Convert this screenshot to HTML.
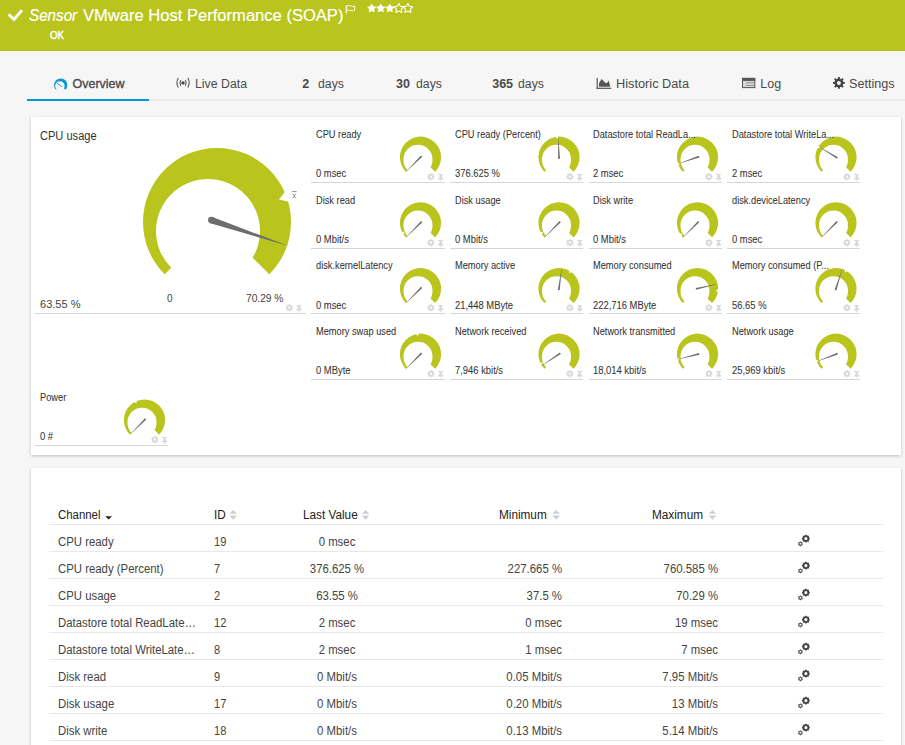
<!DOCTYPE html><html><head><meta charset="utf-8"><style>
*{margin:0;padding:0;box-sizing:border-box}
html,body{width:905px;height:745px;overflow:hidden;background:#f6f6f6;font-family:"Liberation Sans",sans-serif;color:#444}
.a{position:absolute;white-space:nowrap;line-height:1;z-index:2}
.hdr{position:absolute;left:0;top:0;width:905px;height:51px;background:#b9c41c;border-bottom:1px solid #b2bd0c}
.t{color:#fff}
.tab{font-size:12.5px;color:#4a4a4a}
.panel{position:absolute;left:31px;width:870px;background:#fff;box-shadow:0 1px 3px rgba(0,0,0,.22)}
.tt{color:#333;-webkit-text-stroke:0.05px #333}
.ln{position:absolute;height:1px;background:#d6d6d6}
.tb{font-size:12px;color:#444}
.th{font-size:12px;color:#222}
svg{position:absolute;left:0;top:0;overflow:visible;z-index:1}
</style></head><body>
<div class="hdr"></div>
<div class="a t" style="left:29px;top:8px;font-size:16px;transform:scaleX(0.95);transform-origin:0 0;-webkit-text-stroke:0.2px #fff"><i>Sensor</i></div>
<div class="a t" style="left:82.5px;top:8px;font-size:16px;transform:scaleX(1.035);transform-origin:0 0;-webkit-text-stroke:0.2px #fff">VMware Host Performance (SOAP)</div>
<div class="a t" style="left:49.5px;top:30px;font-size:10.5px;transform:scaleX(0.92);transform-origin:0 0;-webkit-text-stroke:0.45px #fff">OK</div>
<div class="a tab" style="left:72.5px;top:78px;font-size:12.5px;transform-origin:0 0;-webkit-text-stroke:0.35px #4a4a4a;">Overview</div>
<div class="a tab" style="left:194.5px;top:78px;font-size:12.5px;transform:scaleX(0.985);transform-origin:0 0;">Live Data</div>
<div class="a tab" style="left:302.3px;top:78px;font-size:12.5px;transform-origin:0 0;font-weight:bold">2</div>
<div class="a tab" style="left:318px;top:78px;font-size:12.5px;transform:scaleX(0.98);transform-origin:0 0;">days</div>
<div class="a tab" style="left:396px;top:78px;font-size:12.5px;transform-origin:0 0;font-weight:bold">30</div>
<div class="a tab" style="left:415.8px;top:78px;font-size:12.5px;transform:scaleX(0.98);transform-origin:0 0;">days</div>
<div class="a tab" style="left:492.2px;top:78px;font-size:12.5px;transform-origin:0 0;font-weight:bold">365</div>
<div class="a tab" style="left:518.2px;top:78px;font-size:12.5px;transform:scaleX(0.98);transform-origin:0 0;">days</div>
<div class="a tab" style="left:616.2px;top:78px;font-size:12.5px;transform:scaleX(1.02);transform-origin:0 0;">Historic Data</div>
<div class="a tab" style="left:760.3px;top:78px;font-size:12.5px;transform-origin:0 0;">Log</div>
<div class="a tab" style="left:849.3px;top:78px;font-size:12.5px;transform:scaleX(1.01);transform-origin:0 0;">Settings</div>
<div class="a" style="left:27px;top:99px;width:878px;height:2px;background:#ebebeb"></div>
<div class="a" style="left:27px;top:99px;width:122px;height:2px;background:#0596d4"></div>
<div class="panel" style="top:117px;height:338px"></div>
<div class="panel" style="top:468px;height:300px"></div>
<div class="a " style="left:39.5px;top:130px;font-size:12.3px;transform:scaleX(0.9);transform-origin:0 0;color:#333">CPU usage</div>
<div class="a " style="left:39.5px;top:299px;font-size:11.5px;transform:scaleX(0.96);transform-origin:0 0;color:#444">63.55 %</div>
<div class="a " style="left:166.5px;top:293px;font-size:10.5px;transform:scaleX(0.95);transform-origin:0 0;color:#444">0</div>
<div class="a " style="left:245.5px;top:293px;font-size:10.5px;transform:scaleX(0.97);transform-origin:0 0;color:#444">70.29 %</div>
<div class="ln" style="left:35px;top:313px;width:271px"></div>
<div class="a tt" style="left:316.0px;top:130px;font-size:10px;transform:scaleX(0.925);transform-origin:0 0;">CPU ready</div>
<div class="a tt" style="left:316.0px;top:169px;font-size:10px;transform:scaleX(0.94);transform-origin:0 0;">0 msec</div>
<div class="ln" style="left:311px;top:182px;width:134px"></div>
<div class="a tt" style="left:454.6px;top:130px;font-size:10px;transform:scaleX(0.925);transform-origin:0 0;">CPU ready (Percent)</div>
<div class="a tt" style="left:454.6px;top:169px;font-size:10px;transform:scaleX(0.94);transform-origin:0 0;">376.625 %</div>
<div class="ln" style="left:450px;top:182px;width:133px"></div>
<div class="a tt" style="left:593.2px;top:130px;font-size:10px;transform:scaleX(0.925);transform-origin:0 0;">Datastore total ReadLa...</div>
<div class="a tt" style="left:593.2px;top:169px;font-size:10px;transform:scaleX(0.94);transform-origin:0 0;">2 msec</div>
<div class="ln" style="left:589px;top:182px;width:133px"></div>
<div class="a tt" style="left:731.8px;top:130px;font-size:10px;transform:scaleX(0.925);transform-origin:0 0;">Datastore total WriteLa...</div>
<div class="a tt" style="left:731.8px;top:169px;font-size:10px;transform:scaleX(0.94);transform-origin:0 0;">2 msec</div>
<div class="ln" style="left:727px;top:182px;width:133px"></div>
<div class="a tt" style="left:316.0px;top:196px;font-size:10px;transform:scaleX(0.925);transform-origin:0 0;">Disk read</div>
<div class="a tt" style="left:316.0px;top:235px;font-size:10px;transform:scaleX(0.94);transform-origin:0 0;">0 Mbit/s</div>
<div class="ln" style="left:311px;top:248px;width:134px"></div>
<div class="a tt" style="left:454.6px;top:196px;font-size:10px;transform:scaleX(0.925);transform-origin:0 0;">Disk usage</div>
<div class="a tt" style="left:454.6px;top:235px;font-size:10px;transform:scaleX(0.94);transform-origin:0 0;">0 Mbit/s</div>
<div class="ln" style="left:450px;top:248px;width:133px"></div>
<div class="a tt" style="left:593.2px;top:196px;font-size:10px;transform:scaleX(0.925);transform-origin:0 0;">Disk write</div>
<div class="a tt" style="left:593.2px;top:235px;font-size:10px;transform:scaleX(0.94);transform-origin:0 0;">0 Mbit/s</div>
<div class="ln" style="left:589px;top:248px;width:133px"></div>
<div class="a tt" style="left:731.8px;top:196px;font-size:10px;transform:scaleX(0.925);transform-origin:0 0;">disk.deviceLatency</div>
<div class="a tt" style="left:731.8px;top:235px;font-size:10px;transform:scaleX(0.94);transform-origin:0 0;">0 msec</div>
<div class="ln" style="left:727px;top:248px;width:133px"></div>
<div class="a tt" style="left:316.0px;top:261px;font-size:10px;transform:scaleX(0.925);transform-origin:0 0;">disk.kernelLatency</div>
<div class="a tt" style="left:316.0px;top:301px;font-size:10px;transform:scaleX(0.94);transform-origin:0 0;">0 msec</div>
<div class="ln" style="left:311px;top:313px;width:134px"></div>
<div class="a tt" style="left:454.6px;top:261px;font-size:10px;transform:scaleX(0.925);transform-origin:0 0;">Memory active</div>
<div class="a tt" style="left:454.6px;top:301px;font-size:10px;transform:scaleX(0.94);transform-origin:0 0;">21,448 MByte</div>
<div class="ln" style="left:450px;top:313px;width:133px"></div>
<div class="a tt" style="left:593.2px;top:261px;font-size:10px;transform:scaleX(0.925);transform-origin:0 0;">Memory consumed</div>
<div class="a tt" style="left:593.2px;top:301px;font-size:10px;transform:scaleX(0.94);transform-origin:0 0;">222,716 MByte</div>
<div class="ln" style="left:589px;top:313px;width:133px"></div>
<div class="a tt" style="left:731.8px;top:261px;font-size:10px;transform:scaleX(0.925);transform-origin:0 0;">Memory consumed (P...</div>
<div class="a tt" style="left:731.8px;top:301px;font-size:10px;transform:scaleX(0.94);transform-origin:0 0;">56.65 %</div>
<div class="ln" style="left:727px;top:313px;width:133px"></div>
<div class="a tt" style="left:316.0px;top:327px;font-size:10px;transform:scaleX(0.925);transform-origin:0 0;">Memory swap used</div>
<div class="a tt" style="left:316.0px;top:366px;font-size:10px;transform:scaleX(0.94);transform-origin:0 0;">0 MByte</div>
<div class="ln" style="left:311px;top:379px;width:134px"></div>
<div class="a tt" style="left:454.6px;top:327px;font-size:10px;transform:scaleX(0.925);transform-origin:0 0;">Network received</div>
<div class="a tt" style="left:454.6px;top:366px;font-size:10px;transform:scaleX(0.94);transform-origin:0 0;">7,946 kbit/s</div>
<div class="ln" style="left:450px;top:379px;width:133px"></div>
<div class="a tt" style="left:593.2px;top:327px;font-size:10px;transform:scaleX(0.925);transform-origin:0 0;">Network transmitted</div>
<div class="a tt" style="left:593.2px;top:366px;font-size:10px;transform:scaleX(0.94);transform-origin:0 0;">18,014 kbit/s</div>
<div class="ln" style="left:589px;top:379px;width:133px"></div>
<div class="a tt" style="left:731.8px;top:327px;font-size:10px;transform:scaleX(0.925);transform-origin:0 0;">Network usage</div>
<div class="a tt" style="left:731.8px;top:366px;font-size:10px;transform:scaleX(0.94);transform-origin:0 0;">25,969 kbit/s</div>
<div class="ln" style="left:727px;top:379px;width:133px"></div>
<div class="a tt" style="left:40px;top:393px;font-size:10px;transform:scaleX(0.925);transform-origin:0 0;">Power</div>
<div class="a tt" style="left:40px;top:432px;font-size:10px;transform:scaleX(0.94);transform-origin:0 0;">0 #</div>
<div class="ln" style="left:35px;top:445px;width:133px"></div>
<div class="a th" style="left:58px;top:509px;font-size:12px;transform:scaleX(0.95);transform-origin:0 0;">Channel</div>
<div class="a th" style="left:214px;top:509px;font-size:12px;transform:scaleX(0.98);transform-origin:0 0;">ID</div>
<div class="a th" style="left:302.5px;top:509px;font-size:12px;transform:scaleX(0.98);transform-origin:0 0;">Last Value</div>
<div class="a th" style="left:498.5px;top:509px;font-size:12px;transform:scaleX(0.98);transform-origin:0 0;">Minimum</div>
<div class="a th" style="left:651.5px;top:509px;font-size:12px;transform:scaleX(0.98);transform-origin:0 0;">Maximum</div>
<div class="ln" style="left:49px;top:524px;width:834px;background:#e8e8e8"></div>
<div class="a tb" style="left:58px;top:536px;font-size:12.3px;transform:scaleX(0.925);transform-origin:0 0;">CPU ready</div>
<div class="a tb" style="left:213.9px;top:536px;font-size:12.3px;transform:scaleX(0.9);transform-origin:0 0;">19</div>
<div class="a tb" style="left:187.0px;width:300px;text-align:center;top:536px;font-size:12.3px;transform:scaleX(0.925);transform-origin:50% 0;">0 msec</div>
<div class="ln" style="left:49px;top:551px;width:834px;background:#e8e8e8"></div>
<div class="a tb" style="left:58px;top:563px;font-size:12.3px;transform:scaleX(0.925);transform-origin:0 0;">CPU ready (Percent)</div>
<div class="a tb" style="left:213.9px;top:563px;font-size:12.3px;transform:scaleX(0.9);transform-origin:0 0;">7</div>
<div class="a tb" style="left:187.0px;width:300px;text-align:center;top:563px;font-size:12.3px;transform:scaleX(0.925);transform-origin:50% 0;">376.625 %</div>
<div class="a tb" style="left:262.29999999999995px;width:300px;text-align:right;top:563px;font-size:12.3px;transform:scaleX(0.925);transform-origin:100% 0;">227.665 %</div>
<div class="a tb" style="left:418.29999999999995px;width:300px;text-align:right;top:563px;font-size:12.3px;transform:scaleX(0.925);transform-origin:100% 0;">760.585 %</div>
<div class="ln" style="left:49px;top:578px;width:834px;background:#e8e8e8"></div>
<div class="a tb" style="left:58px;top:590px;font-size:12.3px;transform:scaleX(0.925);transform-origin:0 0;">CPU usage</div>
<div class="a tb" style="left:213.9px;top:590px;font-size:12.3px;transform:scaleX(0.9);transform-origin:0 0;">2</div>
<div class="a tb" style="left:187.0px;width:300px;text-align:center;top:590px;font-size:12.3px;transform:scaleX(0.925);transform-origin:50% 0;">63.55 %</div>
<div class="a tb" style="left:262.29999999999995px;width:300px;text-align:right;top:590px;font-size:12.3px;transform:scaleX(0.925);transform-origin:100% 0;">37.5 %</div>
<div class="a tb" style="left:418.29999999999995px;width:300px;text-align:right;top:590px;font-size:12.3px;transform:scaleX(0.925);transform-origin:100% 0;">70.29 %</div>
<div class="ln" style="left:49px;top:605px;width:834px;background:#e8e8e8"></div>
<div class="a tb" style="left:58px;top:617px;font-size:12.3px;transform:scaleX(0.925);transform-origin:0 0;">Datastore total ReadLate…</div>
<div class="a tb" style="left:213.9px;top:617px;font-size:12.3px;transform:scaleX(0.9);transform-origin:0 0;">12</div>
<div class="a tb" style="left:187.0px;width:300px;text-align:center;top:617px;font-size:12.3px;transform:scaleX(0.925);transform-origin:50% 0;">2 msec</div>
<div class="a tb" style="left:262.29999999999995px;width:300px;text-align:right;top:617px;font-size:12.3px;transform:scaleX(0.925);transform-origin:100% 0;">0 msec</div>
<div class="a tb" style="left:418.29999999999995px;width:300px;text-align:right;top:617px;font-size:12.3px;transform:scaleX(0.925);transform-origin:100% 0;">19 msec</div>
<div class="ln" style="left:49px;top:632px;width:834px;background:#e8e8e8"></div>
<div class="a tb" style="left:58px;top:644px;font-size:12.3px;transform:scaleX(0.925);transform-origin:0 0;">Datastore total WriteLate…</div>
<div class="a tb" style="left:213.9px;top:644px;font-size:12.3px;transform:scaleX(0.9);transform-origin:0 0;">8</div>
<div class="a tb" style="left:187.0px;width:300px;text-align:center;top:644px;font-size:12.3px;transform:scaleX(0.925);transform-origin:50% 0;">2 msec</div>
<div class="a tb" style="left:262.29999999999995px;width:300px;text-align:right;top:644px;font-size:12.3px;transform:scaleX(0.925);transform-origin:100% 0;">1 msec</div>
<div class="a tb" style="left:418.29999999999995px;width:300px;text-align:right;top:644px;font-size:12.3px;transform:scaleX(0.925);transform-origin:100% 0;">7 msec</div>
<div class="ln" style="left:49px;top:659px;width:834px;background:#e8e8e8"></div>
<div class="a tb" style="left:58px;top:671px;font-size:12.3px;transform:scaleX(0.925);transform-origin:0 0;">Disk read</div>
<div class="a tb" style="left:213.9px;top:671px;font-size:12.3px;transform:scaleX(0.9);transform-origin:0 0;">9</div>
<div class="a tb" style="left:187.0px;width:300px;text-align:center;top:671px;font-size:12.3px;transform:scaleX(0.925);transform-origin:50% 0;">0 Mbit/s</div>
<div class="a tb" style="left:262.29999999999995px;width:300px;text-align:right;top:671px;font-size:12.3px;transform:scaleX(0.925);transform-origin:100% 0;">0.05 Mbit/s</div>
<div class="a tb" style="left:418.29999999999995px;width:300px;text-align:right;top:671px;font-size:12.3px;transform:scaleX(0.925);transform-origin:100% 0;">7.95 Mbit/s</div>
<div class="ln" style="left:49px;top:686px;width:834px;background:#e8e8e8"></div>
<div class="a tb" style="left:58px;top:698px;font-size:12.3px;transform:scaleX(0.925);transform-origin:0 0;">Disk usage</div>
<div class="a tb" style="left:213.9px;top:698px;font-size:12.3px;transform:scaleX(0.9);transform-origin:0 0;">17</div>
<div class="a tb" style="left:187.0px;width:300px;text-align:center;top:698px;font-size:12.3px;transform:scaleX(0.925);transform-origin:50% 0;">0 Mbit/s</div>
<div class="a tb" style="left:262.29999999999995px;width:300px;text-align:right;top:698px;font-size:12.3px;transform:scaleX(0.925);transform-origin:100% 0;">0.20 Mbit/s</div>
<div class="a tb" style="left:418.29999999999995px;width:300px;text-align:right;top:698px;font-size:12.3px;transform:scaleX(0.925);transform-origin:100% 0;">13 Mbit/s</div>
<div class="ln" style="left:49px;top:713px;width:834px;background:#e8e8e8"></div>
<div class="a tb" style="left:58px;top:725px;font-size:12.3px;transform:scaleX(0.925);transform-origin:0 0;">Disk write</div>
<div class="a tb" style="left:213.9px;top:725px;font-size:12.3px;transform:scaleX(0.9);transform-origin:0 0;">18</div>
<div class="a tb" style="left:187.0px;width:300px;text-align:center;top:725px;font-size:12.3px;transform:scaleX(0.925);transform-origin:50% 0;">0 Mbit/s</div>
<div class="a tb" style="left:262.29999999999995px;width:300px;text-align:right;top:725px;font-size:12.3px;transform:scaleX(0.925);transform-origin:100% 0;">0.13 Mbit/s</div>
<div class="a tb" style="left:418.29999999999995px;width:300px;text-align:right;top:725px;font-size:12.3px;transform:scaleX(0.925);transform-origin:100% 0;">5.14 Mbit/s</div>
<div class="ln" style="left:49px;top:740px;width:834px;background:#e8e8e8"></div>
<svg width="905" height="745" viewBox="0 0 905 745"><path d="M8.6,14.4 L14.1,19.4 L21.9,10.2" stroke="#fff" stroke-width="2.9" fill="none"/>
<path d="M346.3,13.4 V5.2" stroke="#fff" stroke-width="1.2" fill="none"/><path d="M346.8,6 Q349,5 351,6 T354.6,6 V10.5 Q352.5,11.4 350.5,10.5 T346.8,10.5" stroke="#fff" stroke-width="0.9" fill="none"/>
<polygon points="371.70,3.40 373.23,6.30 376.46,6.85 374.17,9.20 374.64,12.45 371.70,11.00 368.76,12.45 369.23,9.20 366.94,6.85 370.17,6.30" fill="#fff"/>
<polygon points="380.75,3.40 382.28,6.30 385.51,6.85 383.22,9.20 383.69,12.45 380.75,11.00 377.81,12.45 378.28,9.20 375.99,6.85 379.22,6.30" fill="#fff"/>
<polygon points="389.80,3.40 391.33,6.30 394.56,6.85 392.27,9.20 392.74,12.45 389.80,11.00 386.86,12.45 387.33,9.20 385.04,6.85 388.27,6.30" fill="#fff"/>
<polygon points="398.85,3.40 400.38,6.30 403.61,6.85 401.32,9.20 401.79,12.45 398.85,11.00 395.91,12.45 396.38,9.20 394.09,6.85 397.32,6.30" fill="none" stroke="#fff" stroke-width="1.1" stroke-linejoin="round"/>
<polygon points="407.90,3.40 409.43,6.30 412.66,6.85 410.37,9.20 410.84,12.45 407.90,11.00 404.96,12.45 405.43,9.20 403.14,6.85 406.37,6.30" fill="none" stroke="#fff" stroke-width="1.1" stroke-linejoin="round"/>
<clipPath id="cov"><polygon points="60.70,85.10 40.60,105.20 40.60,65.00 80.80,65.00 80.80,105.20"/></clipPath><path d="M54.00,85.10a6.70,6.70 0 1,0 13.40,0a6.70,6.70 0 1,0 -13.40,0zM55.18,85.91a4.71,4.71 0 1,0 9.42,0a4.71,4.71 0 1,0 -9.42,0z" fill="#0a98d6" fill-rule="evenodd" clip-path="url(#cov)"/>
<path d="M57.3,83.2 L61.8,86.6" stroke="#0a98d6" stroke-width="0.9" stroke-linecap="round"/>
<g stroke="#555" fill="none" stroke-width="1.1"><path d="M178.3,78 Q175.6,82.8 178.3,87.6"/><path d="M187.8,78 Q190.5,82.8 187.8,87.6"/><path d="M180.8,80 Q179.2,82.8 180.8,85.7"/><path d="M185.3,80 Q186.9,82.8 185.3,85.7"/></g><circle cx="183" cy="82.9" r="1.7" fill="#444"/>
<rect x="596.6" y="77.9" width="1.2" height="11" fill="#555"/><rect x="596.6" y="87.7" width="14.6" height="1.2" fill="#555"/><polygon points="599,86.7 599,83.2 601.6,79 605,82.6 606.8,83.2 608.8,80.6 610.2,86.7" fill="#555"/>
<rect x="742.5" y="78.4" width="12.3" height="9.2" fill="#d6d6d6" stroke="#555" stroke-width="1"/><rect x="742" y="77.9" width="13.3" height="3" fill="#555"/><rect x="746" y="82.4" width="8" height="0.8" fill="#888"/><rect x="746" y="85.2" width="8" height="0.8" fill="#888"/>
<path d="M837.87,78.62 L838.01,76.97 L839.79,76.97 L839.93,78.62 L841.20,79.15 L842.46,78.07 L843.73,79.34 L842.65,80.60 L843.18,81.87 L844.83,82.01 L844.83,83.79 L843.18,83.93 L842.65,85.20 L843.73,86.46 L842.46,87.73 L841.20,86.65 L839.93,87.18 L839.79,88.83 L838.01,88.83 L837.87,87.18 L836.60,86.65 L835.34,87.73 L834.07,86.46 L835.15,85.20 L834.62,83.93 L832.97,83.79 L832.97,82.01 L834.62,81.87 L835.15,80.60 L834.07,79.34 L835.34,78.07 L836.60,79.15zM836.90,82.90a2.0,2.0 0 1,0 4.0,0a2.0,2.0 0 1,0 -4.0,0z" fill="#444" fill-rule="evenodd"/>
<clipPath id="cbig"><polygon points="217.00,222.00 -5.00,444.00 -5.00,0.00 439.00,0.00 439.00,444.00"/></clipPath>
<path d="M143.00,222.00a74.00,74.00 0 1,0 148.00,0a74.00,74.00 0 1,0 -148.00,0zM156.00,231.00a52.00,52.00 0 1,0 104.00,0a52.00,52.00 0 1,0 -104.00,0z" fill="#b9c41c" fill-rule="evenodd" clip-path="url(#cbig)"/>
<polygon fill="#fff" points="278.93,199.58 295.17,203.15 289.13,186.45"/>
<polygon fill="#6d6d6d" points="210.33,223.27 288.54,246.08 212.45,216.96"/>
<circle cx="211.39" cy="220.11" r="3.33" fill="#6d6d6d"/>
<path d="M291.8,191.6 H296.6 M292.6,193.6 L296,198.2 M296,193.6 L292.6,198.2" stroke="#777" stroke-width="0.8" fill="none"/>
<path d="M288.62,304.88 L288.74,303.94 L289.86,303.94 L289.98,304.88 L290.82,305.23 L291.56,304.64 L292.36,305.44 L291.77,306.18 L292.12,307.02 L293.06,307.14 L293.06,308.26 L292.12,308.38 L291.77,309.22 L292.36,309.96 L291.56,310.76 L290.82,310.17 L289.98,310.52 L289.86,311.46 L288.74,311.46 L288.62,310.52 L287.78,310.17 L287.04,310.76 L286.24,309.96 L286.83,309.22 L286.48,308.38 L285.54,308.26 L285.54,307.14 L286.48,307.02 L286.83,306.18 L286.24,305.44 L287.04,304.64 L287.78,305.23zM288.20,307.70a1.1,1.1 0 1,0 2.2,0a1.1,1.1 0 1,0 -2.2,0z" fill="#d9d9d9" fill-rule="evenodd"/><path d="M296.30,305.00 h5.2 v1.1 h-1.2 v2.2 l1.5,1.2 v0.9 h-2.3 v1.8 h-0.8 v-1.8 h-2.3 v-0.9 l1.5,-1.2 v-2.2 h-1.3z" fill="#d9d9d9"/>
<clipPath id="ct0"><polygon points="420.50,157.20 358.70,219.00 358.70,95.40 482.30,95.40 482.30,219.00"/></clipPath>
<path d="M399.90,157.20a20.60,20.60 0 1,0 41.20,0a20.60,20.60 0 1,0 -41.20,0zM403.52,159.71a14.48,14.48 0 1,0 28.95,0a14.48,14.48 0 1,0 -28.95,0z" fill="#b9c41c" fill-rule="evenodd" clip-path="url(#ct0)"/>
<polygon fill="#6d6d6d" points="421.01,155.38 404.48,173.22 422.32,156.69"/>
<path d="M430.22,173.88 L430.34,172.94 L431.46,172.94 L431.58,173.88 L432.42,174.23 L433.16,173.64 L433.96,174.44 L433.37,175.18 L433.72,176.02 L434.66,176.14 L434.66,177.26 L433.72,177.38 L433.37,178.22 L433.96,178.96 L433.16,179.76 L432.42,179.17 L431.58,179.52 L431.46,180.46 L430.34,180.46 L430.22,179.52 L429.38,179.17 L428.64,179.76 L427.84,178.96 L428.43,178.22 L428.08,177.38 L427.14,177.26 L427.14,176.14 L428.08,176.02 L428.43,175.18 L427.84,174.44 L428.64,173.64 L429.38,174.23zM429.80,176.70a1.1,1.1 0 1,0 2.2,0a1.1,1.1 0 1,0 -2.2,0z" fill="#d9d9d9" fill-rule="evenodd"/><path d="M437.90,174.00 h5.2 v1.1 h-1.2 v2.2 l1.5,1.2 v0.9 h-2.3 v1.8 h-0.8 v-1.8 h-2.3 v-0.9 l1.5,-1.2 v-2.2 h-1.3z" fill="#d9d9d9"/>
<clipPath id="ct1"><polygon points="559.00,157.20 497.20,219.00 497.20,95.40 620.80,95.40 620.80,219.00"/></clipPath>
<path d="M538.40,157.20a20.60,20.60 0 1,0 41.20,0a20.60,20.60 0 1,0 -41.20,0zM542.02,159.71a14.48,14.48 0 1,0 28.95,0a14.48,14.48 0 1,0 -28.95,0z" fill="#b9c41c" fill-rule="evenodd" clip-path="url(#ct1)"/>
<polygon fill="#fff" points="557.40,138.94 559.52,134.82 554.60,135.25"/>
<polygon fill="#6d6d6d" points="559.98,158.81 558.21,134.55 558.13,158.88"/>
<path d="M569.22,173.88 L569.34,172.94 L570.46,172.94 L570.58,173.88 L571.42,174.23 L572.16,173.64 L572.96,174.44 L572.37,175.18 L572.72,176.02 L573.66,176.14 L573.66,177.26 L572.72,177.38 L572.37,178.22 L572.96,178.96 L572.16,179.76 L571.42,179.17 L570.58,179.52 L570.46,180.46 L569.34,180.46 L569.22,179.52 L568.38,179.17 L567.64,179.76 L566.84,178.96 L567.43,178.22 L567.08,177.38 L566.14,177.26 L566.14,176.14 L567.08,176.02 L567.43,175.18 L566.84,174.44 L567.64,173.64 L568.38,174.23zM568.80,176.70a1.1,1.1 0 1,0 2.2,0a1.1,1.1 0 1,0 -2.2,0z" fill="#d9d9d9" fill-rule="evenodd"/><path d="M576.90,174.00 h5.2 v1.1 h-1.2 v2.2 l1.5,1.2 v0.9 h-2.3 v1.8 h-0.8 v-1.8 h-2.3 v-0.9 l1.5,-1.2 v-2.2 h-1.3z" fill="#d9d9d9"/>
<clipPath id="ct2"><polygon points="697.50,157.20 635.70,219.00 635.70,95.40 759.30,95.40 759.30,219.00"/></clipPath>
<path d="M676.90,157.20a20.60,20.60 0 1,0 41.20,0a20.60,20.60 0 1,0 -41.20,0zM680.52,159.71a14.48,14.48 0 1,0 28.95,0a14.48,14.48 0 1,0 -28.95,0z" fill="#b9c41c" fill-rule="evenodd" clip-path="url(#ct2)"/>
<polygon fill="#fff" points="680.16,163.17 675.66,162.11 677.27,166.78"/>
<polygon fill="#6d6d6d" points="698.76,155.79 676.07,164.58 699.36,157.54"/>
<path d="M708.22,173.88 L708.34,172.94 L709.46,172.94 L709.58,173.88 L710.42,174.23 L711.16,173.64 L711.96,174.44 L711.37,175.18 L711.72,176.02 L712.66,176.14 L712.66,177.26 L711.72,177.38 L711.37,178.22 L711.96,178.96 L711.16,179.76 L710.42,179.17 L709.58,179.52 L709.46,180.46 L708.34,180.46 L708.22,179.52 L707.38,179.17 L706.64,179.76 L705.84,178.96 L706.43,178.22 L706.08,177.38 L705.14,177.26 L705.14,176.14 L706.08,176.02 L706.43,175.18 L705.84,174.44 L706.64,173.64 L707.38,174.23zM707.80,176.70a1.1,1.1 0 1,0 2.2,0a1.1,1.1 0 1,0 -2.2,0z" fill="#d9d9d9" fill-rule="evenodd"/><path d="M715.90,174.00 h5.2 v1.1 h-1.2 v2.2 l1.5,1.2 v0.9 h-2.3 v1.8 h-0.8 v-1.8 h-2.3 v-0.9 l1.5,-1.2 v-2.2 h-1.3z" fill="#d9d9d9"/>
<clipPath id="ct3"><polygon points="836.00,157.20 774.20,219.00 774.20,95.40 897.80,95.40 897.80,219.00"/></clipPath>
<path d="M815.40,157.20a20.60,20.60 0 1,0 41.20,0a20.60,20.60 0 1,0 -41.20,0zM819.02,159.71a14.48,14.48 0 1,0 28.95,0a14.48,14.48 0 1,0 -28.95,0z" fill="#b9c41c" fill-rule="evenodd" clip-path="url(#ct3)"/>
<polygon fill="#fff" points="820.12,148.03 817.97,143.94 815.50,148.22"/>
<polygon fill="#6d6d6d" points="837.89,157.27 816.70,145.33 836.92,158.85"/>
<path d="M846.22,173.88 L846.34,172.94 L847.46,172.94 L847.58,173.88 L848.42,174.23 L849.16,173.64 L849.96,174.44 L849.37,175.18 L849.72,176.02 L850.66,176.14 L850.66,177.26 L849.72,177.38 L849.37,178.22 L849.96,178.96 L849.16,179.76 L848.42,179.17 L847.58,179.52 L847.46,180.46 L846.34,180.46 L846.22,179.52 L845.38,179.17 L844.64,179.76 L843.84,178.96 L844.43,178.22 L844.08,177.38 L843.14,177.26 L843.14,176.14 L844.08,176.02 L844.43,175.18 L843.84,174.44 L844.64,173.64 L845.38,174.23zM845.80,176.70a1.1,1.1 0 1,0 2.2,0a1.1,1.1 0 1,0 -2.2,0z" fill="#d9d9d9" fill-rule="evenodd"/><path d="M853.90,174.00 h5.2 v1.1 h-1.2 v2.2 l1.5,1.2 v0.9 h-2.3 v1.8 h-0.8 v-1.8 h-2.3 v-0.9 l1.5,-1.2 v-2.2 h-1.3z" fill="#d9d9d9"/>
<clipPath id="ct4"><polygon points="420.50,222.87 358.70,284.67 358.70,161.07 482.30,161.07 482.30,284.67"/></clipPath>
<path d="M399.90,222.87a20.60,20.60 0 1,0 41.20,0a20.60,20.60 0 1,0 -41.20,0zM403.52,225.38a14.48,14.48 0 1,0 28.95,0a14.48,14.48 0 1,0 -28.95,0z" fill="#b9c41c" fill-rule="evenodd" clip-path="url(#ct4)"/>
<polygon fill="#fff" points="404.62,232.04 400.00,231.85 402.47,236.13"/>
<polygon fill="#6d6d6d" points="421.01,221.05 404.48,238.89 422.32,222.36"/>
<path d="M430.22,239.88 L430.34,238.94 L431.46,238.94 L431.58,239.88 L432.42,240.23 L433.16,239.64 L433.96,240.44 L433.37,241.18 L433.72,242.02 L434.66,242.14 L434.66,243.26 L433.72,243.38 L433.37,244.22 L433.96,244.96 L433.16,245.76 L432.42,245.17 L431.58,245.52 L431.46,246.46 L430.34,246.46 L430.22,245.52 L429.38,245.17 L428.64,245.76 L427.84,244.96 L428.43,244.22 L428.08,243.38 L427.14,243.26 L427.14,242.14 L428.08,242.02 L428.43,241.18 L427.84,240.44 L428.64,239.64 L429.38,240.23zM429.80,242.70a1.1,1.1 0 1,0 2.2,0a1.1,1.1 0 1,0 -2.2,0z" fill="#d9d9d9" fill-rule="evenodd"/><path d="M437.90,240.00 h5.2 v1.1 h-1.2 v2.2 l1.5,1.2 v0.9 h-2.3 v1.8 h-0.8 v-1.8 h-2.3 v-0.9 l1.5,-1.2 v-2.2 h-1.3z" fill="#d9d9d9"/>
<clipPath id="ct5"><polygon points="559.00,222.87 497.20,284.67 497.20,161.07 620.80,161.07 620.80,284.67"/></clipPath>
<path d="M538.40,222.87a20.60,20.60 0 1,0 41.20,0a20.60,20.60 0 1,0 -41.20,0zM542.02,225.38a14.48,14.48 0 1,0 28.95,0a14.48,14.48 0 1,0 -28.95,0z" fill="#b9c41c" fill-rule="evenodd" clip-path="url(#ct5)"/>
<polygon fill="#fff" points="543.12,232.04 538.50,231.85 540.97,236.13"/>
<polygon fill="#6d6d6d" points="559.51,221.05 542.98,238.89 560.82,222.36"/>
<path d="M569.22,239.88 L569.34,238.94 L570.46,238.94 L570.58,239.88 L571.42,240.23 L572.16,239.64 L572.96,240.44 L572.37,241.18 L572.72,242.02 L573.66,242.14 L573.66,243.26 L572.72,243.38 L572.37,244.22 L572.96,244.96 L572.16,245.76 L571.42,245.17 L570.58,245.52 L570.46,246.46 L569.34,246.46 L569.22,245.52 L568.38,245.17 L567.64,245.76 L566.84,244.96 L567.43,244.22 L567.08,243.38 L566.14,243.26 L566.14,242.14 L567.08,242.02 L567.43,241.18 L566.84,240.44 L567.64,239.64 L568.38,240.23zM568.80,242.70a1.1,1.1 0 1,0 2.2,0a1.1,1.1 0 1,0 -2.2,0z" fill="#d9d9d9" fill-rule="evenodd"/><path d="M576.90,240.00 h5.2 v1.1 h-1.2 v2.2 l1.5,1.2 v0.9 h-2.3 v1.8 h-0.8 v-1.8 h-2.3 v-0.9 l1.5,-1.2 v-2.2 h-1.3z" fill="#d9d9d9"/>
<clipPath id="ct6"><polygon points="697.50,222.87 635.70,284.67 635.70,161.07 759.30,161.07 759.30,284.67"/></clipPath>
<path d="M676.90,222.87a20.60,20.60 0 1,0 41.20,0a20.60,20.60 0 1,0 -41.20,0zM680.52,225.38a14.48,14.48 0 1,0 28.95,0a14.48,14.48 0 1,0 -28.95,0z" fill="#b9c41c" fill-rule="evenodd" clip-path="url(#ct6)"/>
<polygon fill="#fff" points="682.48,233.39 677.86,233.61 680.69,237.66"/>
<polygon fill="#6d6d6d" points="698.01,221.05 681.48,238.89 699.32,222.36"/>
<path d="M708.22,239.88 L708.34,238.94 L709.46,238.94 L709.58,239.88 L710.42,240.23 L711.16,239.64 L711.96,240.44 L711.37,241.18 L711.72,242.02 L712.66,242.14 L712.66,243.26 L711.72,243.38 L711.37,244.22 L711.96,244.96 L711.16,245.76 L710.42,245.17 L709.58,245.52 L709.46,246.46 L708.34,246.46 L708.22,245.52 L707.38,245.17 L706.64,245.76 L705.84,244.96 L706.43,244.22 L706.08,243.38 L705.14,243.26 L705.14,242.14 L706.08,242.02 L706.43,241.18 L705.84,240.44 L706.64,239.64 L707.38,240.23zM707.80,242.70a1.1,1.1 0 1,0 2.2,0a1.1,1.1 0 1,0 -2.2,0z" fill="#d9d9d9" fill-rule="evenodd"/><path d="M715.90,240.00 h5.2 v1.1 h-1.2 v2.2 l1.5,1.2 v0.9 h-2.3 v1.8 h-0.8 v-1.8 h-2.3 v-0.9 l1.5,-1.2 v-2.2 h-1.3z" fill="#d9d9d9"/>
<clipPath id="ct7"><polygon points="836.00,222.87 774.20,284.67 774.20,161.07 897.80,161.07 897.80,284.67"/></clipPath>
<path d="M815.40,222.87a20.60,20.60 0 1,0 41.20,0a20.60,20.60 0 1,0 -41.20,0zM819.02,225.38a14.48,14.48 0 1,0 28.95,0a14.48,14.48 0 1,0 -28.95,0z" fill="#b9c41c" fill-rule="evenodd" clip-path="url(#ct7)"/>
<polygon fill="#6d6d6d" points="836.51,221.05 819.98,238.89 837.82,222.36"/>
<path d="M846.22,239.88 L846.34,238.94 L847.46,238.94 L847.58,239.88 L848.42,240.23 L849.16,239.64 L849.96,240.44 L849.37,241.18 L849.72,242.02 L850.66,242.14 L850.66,243.26 L849.72,243.38 L849.37,244.22 L849.96,244.96 L849.16,245.76 L848.42,245.17 L847.58,245.52 L847.46,246.46 L846.34,246.46 L846.22,245.52 L845.38,245.17 L844.64,245.76 L843.84,244.96 L844.43,244.22 L844.08,243.38 L843.14,243.26 L843.14,242.14 L844.08,242.02 L844.43,241.18 L843.84,240.44 L844.64,239.64 L845.38,240.23zM845.80,242.70a1.1,1.1 0 1,0 2.2,0a1.1,1.1 0 1,0 -2.2,0z" fill="#d9d9d9" fill-rule="evenodd"/><path d="M853.90,240.00 h5.2 v1.1 h-1.2 v2.2 l1.5,1.2 v0.9 h-2.3 v1.8 h-0.8 v-1.8 h-2.3 v-0.9 l1.5,-1.2 v-2.2 h-1.3z" fill="#d9d9d9"/>
<clipPath id="ct8"><polygon points="420.50,288.54 358.70,350.34 358.70,226.74 482.30,226.74 482.30,350.34"/></clipPath>
<path d="M399.90,288.54a20.60,20.60 0 1,0 41.20,0a20.60,20.60 0 1,0 -41.20,0zM403.52,291.05a14.48,14.48 0 1,0 28.95,0a14.48,14.48 0 1,0 -28.95,0z" fill="#b9c41c" fill-rule="evenodd" clip-path="url(#ct8)"/>
<polygon fill="#6d6d6d" points="421.01,286.72 404.48,304.56 422.32,288.03"/>
<path d="M430.22,304.88 L430.34,303.94 L431.46,303.94 L431.58,304.88 L432.42,305.23 L433.16,304.64 L433.96,305.44 L433.37,306.18 L433.72,307.02 L434.66,307.14 L434.66,308.26 L433.72,308.38 L433.37,309.22 L433.96,309.96 L433.16,310.76 L432.42,310.17 L431.58,310.52 L431.46,311.46 L430.34,311.46 L430.22,310.52 L429.38,310.17 L428.64,310.76 L427.84,309.96 L428.43,309.22 L428.08,308.38 L427.14,308.26 L427.14,307.14 L428.08,307.02 L428.43,306.18 L427.84,305.44 L428.64,304.64 L429.38,305.23zM429.80,307.70a1.1,1.1 0 1,0 2.2,0a1.1,1.1 0 1,0 -2.2,0z" fill="#d9d9d9" fill-rule="evenodd"/><path d="M437.90,305.00 h5.2 v1.1 h-1.2 v2.2 l1.5,1.2 v0.9 h-2.3 v1.8 h-0.8 v-1.8 h-2.3 v-0.9 l1.5,-1.2 v-2.2 h-1.3z" fill="#d9d9d9"/>
<clipPath id="ct9"><polygon points="559.00,288.54 497.20,350.34 497.20,226.74 620.80,226.74 620.80,350.34"/></clipPath>
<path d="M538.40,288.54a20.60,20.60 0 1,0 41.20,0a20.60,20.60 0 1,0 -41.20,0zM542.02,291.05a14.48,14.48 0 1,0 28.95,0a14.48,14.48 0 1,0 -28.95,0z" fill="#b9c41c" fill-rule="evenodd" clip-path="url(#ct9)"/>
<polygon fill="#fff" points="569.12,273.25 573.34,271.35 569.22,268.62"/>
<polygon fill="#6d6d6d" points="559.70,290.30 562.00,266.08 557.86,290.05"/>
<path d="M569.22,304.88 L569.34,303.94 L570.46,303.94 L570.58,304.88 L571.42,305.23 L572.16,304.64 L572.96,305.44 L572.37,306.18 L572.72,307.02 L573.66,307.14 L573.66,308.26 L572.72,308.38 L572.37,309.22 L572.96,309.96 L572.16,310.76 L571.42,310.17 L570.58,310.52 L570.46,311.46 L569.34,311.46 L569.22,310.52 L568.38,310.17 L567.64,310.76 L566.84,309.96 L567.43,309.22 L567.08,308.38 L566.14,308.26 L566.14,307.14 L567.08,307.02 L567.43,306.18 L566.84,305.44 L567.64,304.64 L568.38,305.23zM568.80,307.70a1.1,1.1 0 1,0 2.2,0a1.1,1.1 0 1,0 -2.2,0z" fill="#d9d9d9" fill-rule="evenodd"/><path d="M576.90,305.00 h5.2 v1.1 h-1.2 v2.2 l1.5,1.2 v0.9 h-2.3 v1.8 h-0.8 v-1.8 h-2.3 v-0.9 l1.5,-1.2 v-2.2 h-1.3z" fill="#d9d9d9"/>
<clipPath id="ct10"><polygon points="697.50,288.54 635.70,350.34 635.70,226.74 759.30,226.74 759.30,350.34"/></clipPath>
<path d="M676.90,288.54a20.60,20.60 0 1,0 41.20,0a20.60,20.60 0 1,0 -41.20,0zM680.52,291.05a14.48,14.48 0 1,0 28.95,0a14.48,14.48 0 1,0 -28.95,0z" fill="#b9c41c" fill-rule="evenodd" clip-path="url(#ct10)"/>
<polygon fill="#fff" points="715.74,290.39 719.38,293.25 719.88,288.33"/>
<polygon fill="#6d6d6d" points="696.10,289.81 719.59,283.48 695.69,288.00"/>
<path d="M708.22,304.88 L708.34,303.94 L709.46,303.94 L709.58,304.88 L710.42,305.23 L711.16,304.64 L711.96,305.44 L711.37,306.18 L711.72,307.02 L712.66,307.14 L712.66,308.26 L711.72,308.38 L711.37,309.22 L711.96,309.96 L711.16,310.76 L710.42,310.17 L709.58,310.52 L709.46,311.46 L708.34,311.46 L708.22,310.52 L707.38,310.17 L706.64,310.76 L705.84,309.96 L706.43,309.22 L706.08,308.38 L705.14,308.26 L705.14,307.14 L706.08,307.02 L706.43,306.18 L705.84,305.44 L706.64,304.64 L707.38,305.23zM707.80,307.70a1.1,1.1 0 1,0 2.2,0a1.1,1.1 0 1,0 -2.2,0z" fill="#d9d9d9" fill-rule="evenodd"/><path d="M715.90,305.00 h5.2 v1.1 h-1.2 v2.2 l1.5,1.2 v0.9 h-2.3 v1.8 h-0.8 v-1.8 h-2.3 v-0.9 l1.5,-1.2 v-2.2 h-1.3z" fill="#d9d9d9"/>
<clipPath id="ct11"><polygon points="836.00,288.54 774.20,350.34 774.20,226.74 897.80,226.74 897.80,350.34"/></clipPath>
<path d="M815.40,288.54a20.60,20.60 0 1,0 41.20,0a20.60,20.60 0 1,0 -41.20,0zM819.02,291.05a14.48,14.48 0 1,0 28.95,0a14.48,14.48 0 1,0 -28.95,0z" fill="#b9c41c" fill-rule="evenodd" clip-path="url(#ct11)"/>
<polygon fill="#fff" points="844.97,272.55 849.04,270.35 844.73,267.93"/>
<polygon fill="#6d6d6d" points="836.38,290.39 842.89,266.95 834.62,289.83"/>
<path d="M846.22,304.88 L846.34,303.94 L847.46,303.94 L847.58,304.88 L848.42,305.23 L849.16,304.64 L849.96,305.44 L849.37,306.18 L849.72,307.02 L850.66,307.14 L850.66,308.26 L849.72,308.38 L849.37,309.22 L849.96,309.96 L849.16,310.76 L848.42,310.17 L847.58,310.52 L847.46,311.46 L846.34,311.46 L846.22,310.52 L845.38,310.17 L844.64,310.76 L843.84,309.96 L844.43,309.22 L844.08,308.38 L843.14,308.26 L843.14,307.14 L844.08,307.02 L844.43,306.18 L843.84,305.44 L844.64,304.64 L845.38,305.23zM845.80,307.70a1.1,1.1 0 1,0 2.2,0a1.1,1.1 0 1,0 -2.2,0z" fill="#d9d9d9" fill-rule="evenodd"/><path d="M853.90,305.00 h5.2 v1.1 h-1.2 v2.2 l1.5,1.2 v0.9 h-2.3 v1.8 h-0.8 v-1.8 h-2.3 v-0.9 l1.5,-1.2 v-2.2 h-1.3z" fill="#d9d9d9"/>
<clipPath id="ct12"><polygon points="420.50,354.21 358.70,416.01 358.70,292.41 482.30,292.41 482.30,416.01"/></clipPath>
<path d="M399.90,354.21a20.60,20.60 0 1,0 41.20,0a20.60,20.60 0 1,0 -41.20,0zM403.52,356.72a14.48,14.48 0 1,0 28.95,0a14.48,14.48 0 1,0 -28.95,0z" fill="#b9c41c" fill-rule="evenodd" clip-path="url(#ct12)"/>
<polygon fill="#fff" points="417.73,336.09 419.58,331.84 414.69,332.59"/>
<polygon fill="#6d6d6d" points="421.01,352.39 404.48,370.23 422.32,353.70"/>
<path d="M430.22,370.88 L430.34,369.94 L431.46,369.94 L431.58,370.88 L432.42,371.23 L433.16,370.64 L433.96,371.44 L433.37,372.18 L433.72,373.02 L434.66,373.14 L434.66,374.26 L433.72,374.38 L433.37,375.22 L433.96,375.96 L433.16,376.76 L432.42,376.17 L431.58,376.52 L431.46,377.46 L430.34,377.46 L430.22,376.52 L429.38,376.17 L428.64,376.76 L427.84,375.96 L428.43,375.22 L428.08,374.38 L427.14,374.26 L427.14,373.14 L428.08,373.02 L428.43,372.18 L427.84,371.44 L428.64,370.64 L429.38,371.23zM429.80,373.70a1.1,1.1 0 1,0 2.2,0a1.1,1.1 0 1,0 -2.2,0z" fill="#d9d9d9" fill-rule="evenodd"/><path d="M437.90,371.00 h5.2 v1.1 h-1.2 v2.2 l1.5,1.2 v0.9 h-2.3 v1.8 h-0.8 v-1.8 h-2.3 v-0.9 l1.5,-1.2 v-2.2 h-1.3z" fill="#d9d9d9"/>
<clipPath id="ct13"><polygon points="559.00,354.21 497.20,416.01 497.20,292.41 620.80,292.41 620.80,416.01"/></clipPath>
<path d="M538.40,354.21a20.60,20.60 0 1,0 41.20,0a20.60,20.60 0 1,0 -41.20,0zM542.02,356.72a14.48,14.48 0 1,0 28.95,0a14.48,14.48 0 1,0 -28.95,0z" fill="#b9c41c" fill-rule="evenodd" clip-path="url(#ct13)"/>
<polygon fill="#fff" points="542.81,362.82 538.20,362.47 540.52,366.84"/>
<polygon fill="#6d6d6d" points="559.86,352.53 540.10,366.72 560.89,354.07"/>
<path d="M569.22,370.88 L569.34,369.94 L570.46,369.94 L570.58,370.88 L571.42,371.23 L572.16,370.64 L572.96,371.44 L572.37,372.18 L572.72,373.02 L573.66,373.14 L573.66,374.26 L572.72,374.38 L572.37,375.22 L572.96,375.96 L572.16,376.76 L571.42,376.17 L570.58,376.52 L570.46,377.46 L569.34,377.46 L569.22,376.52 L568.38,376.17 L567.64,376.76 L566.84,375.96 L567.43,375.22 L567.08,374.38 L566.14,374.26 L566.14,373.14 L567.08,373.02 L567.43,372.18 L566.84,371.44 L567.64,370.64 L568.38,371.23zM568.80,373.70a1.1,1.1 0 1,0 2.2,0a1.1,1.1 0 1,0 -2.2,0z" fill="#d9d9d9" fill-rule="evenodd"/><path d="M576.90,371.00 h5.2 v1.1 h-1.2 v2.2 l1.5,1.2 v0.9 h-2.3 v1.8 h-0.8 v-1.8 h-2.3 v-0.9 l1.5,-1.2 v-2.2 h-1.3z" fill="#d9d9d9"/>
<clipPath id="ct14"><polygon points="697.50,354.21 635.70,416.01 635.70,292.41 759.30,292.41 759.30,416.01"/></clipPath>
<path d="M676.90,354.21a20.60,20.60 0 1,0 41.20,0a20.60,20.60 0 1,0 -41.20,0zM680.52,356.72a14.48,14.48 0 1,0 28.95,0a14.48,14.48 0 1,0 -28.95,0z" fill="#b9c41c" fill-rule="evenodd" clip-path="url(#ct14)"/>
<polygon fill="#fff" points="679.79,358.96 675.37,357.58 676.65,362.36"/>
<polygon fill="#6d6d6d" points="698.85,352.89 675.61,360.07 699.33,354.68"/>
<path d="M708.22,370.88 L708.34,369.94 L709.46,369.94 L709.58,370.88 L710.42,371.23 L711.16,370.64 L711.96,371.44 L711.37,372.18 L711.72,373.02 L712.66,373.14 L712.66,374.26 L711.72,374.38 L711.37,375.22 L711.96,375.96 L711.16,376.76 L710.42,376.17 L709.58,376.52 L709.46,377.46 L708.34,377.46 L708.22,376.52 L707.38,376.17 L706.64,376.76 L705.84,375.96 L706.43,375.22 L706.08,374.38 L705.14,374.26 L705.14,373.14 L706.08,373.02 L706.43,372.18 L705.84,371.44 L706.64,370.64 L707.38,371.23zM707.80,373.70a1.1,1.1 0 1,0 2.2,0a1.1,1.1 0 1,0 -2.2,0z" fill="#d9d9d9" fill-rule="evenodd"/><path d="M715.90,371.00 h5.2 v1.1 h-1.2 v2.2 l1.5,1.2 v0.9 h-2.3 v1.8 h-0.8 v-1.8 h-2.3 v-0.9 l1.5,-1.2 v-2.2 h-1.3z" fill="#d9d9d9"/>
<clipPath id="ct15"><polygon points="836.00,354.21 774.20,416.01 774.20,292.41 897.80,292.41 897.80,416.01"/></clipPath>
<path d="M815.40,354.21a20.60,20.60 0 1,0 41.20,0a20.60,20.60 0 1,0 -41.20,0zM819.02,356.72a14.48,14.48 0 1,0 28.95,0a14.48,14.48 0 1,0 -28.95,0z" fill="#b9c41c" fill-rule="evenodd" clip-path="url(#ct15)"/>
<polygon fill="#fff" points="818.77,360.48 814.25,359.50 815.94,364.14"/>
<polygon fill="#6d6d6d" points="837.21,352.75 814.85,362.33 837.87,354.48"/>
<path d="M846.22,370.88 L846.34,369.94 L847.46,369.94 L847.58,370.88 L848.42,371.23 L849.16,370.64 L849.96,371.44 L849.37,372.18 L849.72,373.02 L850.66,373.14 L850.66,374.26 L849.72,374.38 L849.37,375.22 L849.96,375.96 L849.16,376.76 L848.42,376.17 L847.58,376.52 L847.46,377.46 L846.34,377.46 L846.22,376.52 L845.38,376.17 L844.64,376.76 L843.84,375.96 L844.43,375.22 L844.08,374.38 L843.14,374.26 L843.14,373.14 L844.08,373.02 L844.43,372.18 L843.84,371.44 L844.64,370.64 L845.38,371.23zM845.80,373.70a1.1,1.1 0 1,0 2.2,0a1.1,1.1 0 1,0 -2.2,0z" fill="#d9d9d9" fill-rule="evenodd"/><path d="M853.90,371.00 h5.2 v1.1 h-1.2 v2.2 l1.5,1.2 v0.9 h-2.3 v1.8 h-0.8 v-1.8 h-2.3 v-0.9 l1.5,-1.2 v-2.2 h-1.3z" fill="#d9d9d9"/>
<clipPath id="cpw"><polygon points="144.50,420.00 82.70,481.80 82.70,358.20 206.30,358.20 206.30,481.80"/></clipPath>
<path d="M123.90,420.00a20.60,20.60 0 1,0 41.20,0a20.60,20.60 0 1,0 -41.20,0zM127.52,422.51a14.48,14.48 0 1,0 28.95,0a14.48,14.48 0 1,0 -28.95,0z" fill="#b9c41c" fill-rule="evenodd" clip-path="url(#cpw)"/>
<polygon fill="#fff" points="136.46,403.52 136.97,398.92 132.53,401.09"/>
<polygon fill="#6d6d6d" points="145.01,418.18 128.48,436.02 146.32,419.49"/>
<path d="M154.22,436.88 L154.34,435.94 L155.46,435.94 L155.58,436.88 L156.42,437.23 L157.16,436.64 L157.96,437.44 L157.37,438.18 L157.72,439.02 L158.66,439.14 L158.66,440.26 L157.72,440.38 L157.37,441.22 L157.96,441.96 L157.16,442.76 L156.42,442.17 L155.58,442.52 L155.46,443.46 L154.34,443.46 L154.22,442.52 L153.38,442.17 L152.64,442.76 L151.84,441.96 L152.43,441.22 L152.08,440.38 L151.14,440.26 L151.14,439.14 L152.08,439.02 L152.43,438.18 L151.84,437.44 L152.64,436.64 L153.38,437.23zM153.80,439.70a1.1,1.1 0 1,0 2.2,0a1.1,1.1 0 1,0 -2.2,0z" fill="#d9d9d9" fill-rule="evenodd"/><path d="M161.90,437.00 h5.2 v1.1 h-1.2 v2.2 l1.5,1.2 v0.9 h-2.3 v1.8 h-0.8 v-1.8 h-2.3 v-0.9 l1.5,-1.2 v-2.2 h-1.3z" fill="#d9d9d9"/>
<polygon points="105.3,516.2 112,516.2 108.6,519.5" fill="#222"/>
<polygon points="229.4,513.7 237.0,513.7 233.2,509.9" fill="#cfcfcf"/><polygon points="229.4,515.5 237.0,515.5 233.2,519.8" fill="#cfcfcf"/>
<polygon points="361.8,513.7 369.4,513.7 365.6,509.9" fill="#cfcfcf"/><polygon points="361.8,515.5 369.4,515.5 365.6,519.8" fill="#cfcfcf"/>
<polygon points="552.4,513.7 560.0,513.7 556.2,509.9" fill="#cfcfcf"/><polygon points="552.4,515.5 560.0,515.5 556.2,519.8" fill="#cfcfcf"/>
<polygon points="708.7,513.7 716.3,513.7 712.5,509.9" fill="#cfcfcf"/><polygon points="708.7,515.5 716.3,515.5 712.5,519.8" fill="#cfcfcf"/>
<path d="M805.09,535.25 L805.31,534.69 L806.49,534.69 L806.71,535.25 L807.70,535.66 L808.25,535.42 L809.08,536.25 L808.84,536.80 L809.25,537.79 L809.81,538.01 L809.81,539.19 L809.25,539.41 L808.84,540.40 L809.08,540.95 L808.25,541.78 L807.70,541.54 L806.71,541.95 L806.49,542.51 L805.31,542.51 L805.09,541.95 L804.10,541.54 L803.55,541.78 L802.72,540.95 L802.96,540.40 L802.55,539.41 L801.99,539.19 L801.99,538.01 L802.55,537.79 L802.96,536.80 L802.72,536.25 L803.55,535.42 L804.10,535.66zM804.35,538.60a1.55,1.55 0 1,0 3.1,0a1.55,1.55 0 1,0 -3.1,0z" fill="#444" fill-rule="evenodd"/>
<path d="M799.78,541.90 L799.93,541.45 L800.87,541.45 L801.02,541.90 L801.74,542.31 L802.20,542.21 L802.67,543.03 L802.36,543.38 L802.36,544.22 L802.67,544.57 L802.20,545.39 L801.74,545.29 L801.02,545.70 L800.87,546.15 L799.93,546.15 L799.78,545.70 L799.06,545.29 L798.60,545.39 L798.13,544.57 L798.44,544.22 L798.44,543.38 L798.13,543.03 L798.60,542.21 L799.06,542.31zM799.40,543.80a1.0,1.0 0 1,0 2.0,0a1.0,1.0 0 1,0 -2.0,0z" fill="#444" fill-rule="evenodd"/>
<path d="M805.09,562.25 L805.31,561.69 L806.49,561.69 L806.71,562.25 L807.70,562.66 L808.25,562.42 L809.08,563.25 L808.84,563.80 L809.25,564.79 L809.81,565.01 L809.81,566.19 L809.25,566.41 L808.84,567.40 L809.08,567.95 L808.25,568.78 L807.70,568.54 L806.71,568.95 L806.49,569.51 L805.31,569.51 L805.09,568.95 L804.10,568.54 L803.55,568.78 L802.72,567.95 L802.96,567.40 L802.55,566.41 L801.99,566.19 L801.99,565.01 L802.55,564.79 L802.96,563.80 L802.72,563.25 L803.55,562.42 L804.10,562.66zM804.35,565.60a1.55,1.55 0 1,0 3.1,0a1.55,1.55 0 1,0 -3.1,0z" fill="#444" fill-rule="evenodd"/>
<path d="M799.78,568.90 L799.93,568.45 L800.87,568.45 L801.02,568.90 L801.74,569.31 L802.20,569.21 L802.67,570.03 L802.36,570.38 L802.36,571.22 L802.67,571.57 L802.20,572.39 L801.74,572.29 L801.02,572.70 L800.87,573.15 L799.93,573.15 L799.78,572.70 L799.06,572.29 L798.60,572.39 L798.13,571.57 L798.44,571.22 L798.44,570.38 L798.13,570.03 L798.60,569.21 L799.06,569.31zM799.40,570.80a1.0,1.0 0 1,0 2.0,0a1.0,1.0 0 1,0 -2.0,0z" fill="#444" fill-rule="evenodd"/>
<path d="M805.09,589.25 L805.31,588.69 L806.49,588.69 L806.71,589.25 L807.70,589.66 L808.25,589.42 L809.08,590.25 L808.84,590.80 L809.25,591.79 L809.81,592.01 L809.81,593.19 L809.25,593.41 L808.84,594.40 L809.08,594.95 L808.25,595.78 L807.70,595.54 L806.71,595.95 L806.49,596.51 L805.31,596.51 L805.09,595.95 L804.10,595.54 L803.55,595.78 L802.72,594.95 L802.96,594.40 L802.55,593.41 L801.99,593.19 L801.99,592.01 L802.55,591.79 L802.96,590.80 L802.72,590.25 L803.55,589.42 L804.10,589.66zM804.35,592.60a1.55,1.55 0 1,0 3.1,0a1.55,1.55 0 1,0 -3.1,0z" fill="#444" fill-rule="evenodd"/>
<path d="M799.78,595.90 L799.93,595.45 L800.87,595.45 L801.02,595.90 L801.74,596.31 L802.20,596.21 L802.67,597.03 L802.36,597.38 L802.36,598.22 L802.67,598.57 L802.20,599.39 L801.74,599.29 L801.02,599.70 L800.87,600.15 L799.93,600.15 L799.78,599.70 L799.06,599.29 L798.60,599.39 L798.13,598.57 L798.44,598.22 L798.44,597.38 L798.13,597.03 L798.60,596.21 L799.06,596.31zM799.40,597.80a1.0,1.0 0 1,0 2.0,0a1.0,1.0 0 1,0 -2.0,0z" fill="#444" fill-rule="evenodd"/>
<path d="M805.09,616.25 L805.31,615.69 L806.49,615.69 L806.71,616.25 L807.70,616.66 L808.25,616.42 L809.08,617.25 L808.84,617.80 L809.25,618.79 L809.81,619.01 L809.81,620.19 L809.25,620.41 L808.84,621.40 L809.08,621.95 L808.25,622.78 L807.70,622.54 L806.71,622.95 L806.49,623.51 L805.31,623.51 L805.09,622.95 L804.10,622.54 L803.55,622.78 L802.72,621.95 L802.96,621.40 L802.55,620.41 L801.99,620.19 L801.99,619.01 L802.55,618.79 L802.96,617.80 L802.72,617.25 L803.55,616.42 L804.10,616.66zM804.35,619.60a1.55,1.55 0 1,0 3.1,0a1.55,1.55 0 1,0 -3.1,0z" fill="#444" fill-rule="evenodd"/>
<path d="M799.78,622.90 L799.93,622.45 L800.87,622.45 L801.02,622.90 L801.74,623.31 L802.20,623.21 L802.67,624.03 L802.36,624.38 L802.36,625.22 L802.67,625.57 L802.20,626.39 L801.74,626.29 L801.02,626.70 L800.87,627.15 L799.93,627.15 L799.78,626.70 L799.06,626.29 L798.60,626.39 L798.13,625.57 L798.44,625.22 L798.44,624.38 L798.13,624.03 L798.60,623.21 L799.06,623.31zM799.40,624.80a1.0,1.0 0 1,0 2.0,0a1.0,1.0 0 1,0 -2.0,0z" fill="#444" fill-rule="evenodd"/>
<path d="M805.09,643.25 L805.31,642.69 L806.49,642.69 L806.71,643.25 L807.70,643.66 L808.25,643.42 L809.08,644.25 L808.84,644.80 L809.25,645.79 L809.81,646.01 L809.81,647.19 L809.25,647.41 L808.84,648.40 L809.08,648.95 L808.25,649.78 L807.70,649.54 L806.71,649.95 L806.49,650.51 L805.31,650.51 L805.09,649.95 L804.10,649.54 L803.55,649.78 L802.72,648.95 L802.96,648.40 L802.55,647.41 L801.99,647.19 L801.99,646.01 L802.55,645.79 L802.96,644.80 L802.72,644.25 L803.55,643.42 L804.10,643.66zM804.35,646.60a1.55,1.55 0 1,0 3.1,0a1.55,1.55 0 1,0 -3.1,0z" fill="#444" fill-rule="evenodd"/>
<path d="M799.78,649.90 L799.93,649.45 L800.87,649.45 L801.02,649.90 L801.74,650.31 L802.20,650.21 L802.67,651.03 L802.36,651.38 L802.36,652.22 L802.67,652.57 L802.20,653.39 L801.74,653.29 L801.02,653.70 L800.87,654.15 L799.93,654.15 L799.78,653.70 L799.06,653.29 L798.60,653.39 L798.13,652.57 L798.44,652.22 L798.44,651.38 L798.13,651.03 L798.60,650.21 L799.06,650.31zM799.40,651.80a1.0,1.0 0 1,0 2.0,0a1.0,1.0 0 1,0 -2.0,0z" fill="#444" fill-rule="evenodd"/>
<path d="M805.09,670.25 L805.31,669.69 L806.49,669.69 L806.71,670.25 L807.70,670.66 L808.25,670.42 L809.08,671.25 L808.84,671.80 L809.25,672.79 L809.81,673.01 L809.81,674.19 L809.25,674.41 L808.84,675.40 L809.08,675.95 L808.25,676.78 L807.70,676.54 L806.71,676.95 L806.49,677.51 L805.31,677.51 L805.09,676.95 L804.10,676.54 L803.55,676.78 L802.72,675.95 L802.96,675.40 L802.55,674.41 L801.99,674.19 L801.99,673.01 L802.55,672.79 L802.96,671.80 L802.72,671.25 L803.55,670.42 L804.10,670.66zM804.35,673.60a1.55,1.55 0 1,0 3.1,0a1.55,1.55 0 1,0 -3.1,0z" fill="#444" fill-rule="evenodd"/>
<path d="M799.78,676.90 L799.93,676.45 L800.87,676.45 L801.02,676.90 L801.74,677.31 L802.20,677.21 L802.67,678.03 L802.36,678.38 L802.36,679.22 L802.67,679.57 L802.20,680.39 L801.74,680.29 L801.02,680.70 L800.87,681.15 L799.93,681.15 L799.78,680.70 L799.06,680.29 L798.60,680.39 L798.13,679.57 L798.44,679.22 L798.44,678.38 L798.13,678.03 L798.60,677.21 L799.06,677.31zM799.40,678.80a1.0,1.0 0 1,0 2.0,0a1.0,1.0 0 1,0 -2.0,0z" fill="#444" fill-rule="evenodd"/>
<path d="M805.09,697.25 L805.31,696.69 L806.49,696.69 L806.71,697.25 L807.70,697.66 L808.25,697.42 L809.08,698.25 L808.84,698.80 L809.25,699.79 L809.81,700.01 L809.81,701.19 L809.25,701.41 L808.84,702.40 L809.08,702.95 L808.25,703.78 L807.70,703.54 L806.71,703.95 L806.49,704.51 L805.31,704.51 L805.09,703.95 L804.10,703.54 L803.55,703.78 L802.72,702.95 L802.96,702.40 L802.55,701.41 L801.99,701.19 L801.99,700.01 L802.55,699.79 L802.96,698.80 L802.72,698.25 L803.55,697.42 L804.10,697.66zM804.35,700.60a1.55,1.55 0 1,0 3.1,0a1.55,1.55 0 1,0 -3.1,0z" fill="#444" fill-rule="evenodd"/>
<path d="M799.78,703.90 L799.93,703.45 L800.87,703.45 L801.02,703.90 L801.74,704.31 L802.20,704.21 L802.67,705.03 L802.36,705.38 L802.36,706.22 L802.67,706.57 L802.20,707.39 L801.74,707.29 L801.02,707.70 L800.87,708.15 L799.93,708.15 L799.78,707.70 L799.06,707.29 L798.60,707.39 L798.13,706.57 L798.44,706.22 L798.44,705.38 L798.13,705.03 L798.60,704.21 L799.06,704.31zM799.40,705.80a1.0,1.0 0 1,0 2.0,0a1.0,1.0 0 1,0 -2.0,0z" fill="#444" fill-rule="evenodd"/>
<path d="M805.09,724.25 L805.31,723.69 L806.49,723.69 L806.71,724.25 L807.70,724.66 L808.25,724.42 L809.08,725.25 L808.84,725.80 L809.25,726.79 L809.81,727.01 L809.81,728.19 L809.25,728.41 L808.84,729.40 L809.08,729.95 L808.25,730.78 L807.70,730.54 L806.71,730.95 L806.49,731.51 L805.31,731.51 L805.09,730.95 L804.10,730.54 L803.55,730.78 L802.72,729.95 L802.96,729.40 L802.55,728.41 L801.99,728.19 L801.99,727.01 L802.55,726.79 L802.96,725.80 L802.72,725.25 L803.55,724.42 L804.10,724.66zM804.35,727.60a1.55,1.55 0 1,0 3.1,0a1.55,1.55 0 1,0 -3.1,0z" fill="#444" fill-rule="evenodd"/>
<path d="M799.78,730.90 L799.93,730.45 L800.87,730.45 L801.02,730.90 L801.74,731.31 L802.20,731.21 L802.67,732.03 L802.36,732.38 L802.36,733.22 L802.67,733.57 L802.20,734.39 L801.74,734.29 L801.02,734.70 L800.87,735.15 L799.93,735.15 L799.78,734.70 L799.06,734.29 L798.60,734.39 L798.13,733.57 L798.44,733.22 L798.44,732.38 L798.13,732.03 L798.60,731.21 L799.06,731.31zM799.40,732.80a1.0,1.0 0 1,0 2.0,0a1.0,1.0 0 1,0 -2.0,0z" fill="#444" fill-rule="evenodd"/></svg>
</body></html>
